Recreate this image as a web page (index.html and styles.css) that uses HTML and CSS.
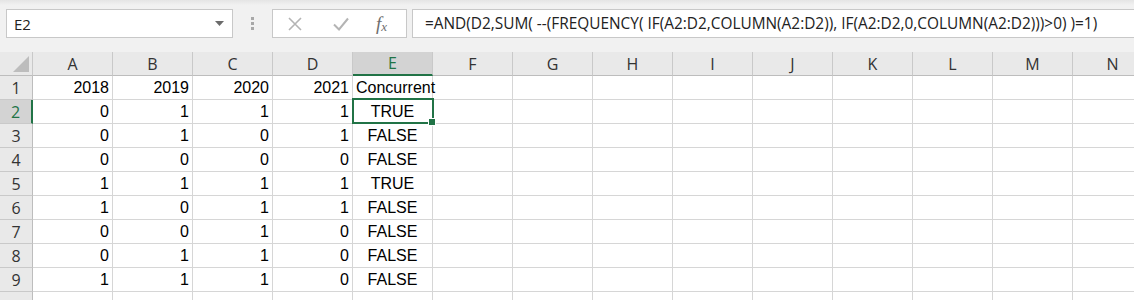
FILE: index.html
```html
<!DOCTYPE html>
<html lang="en">
<head>
    <meta charset="UTF-8">
    <title>Concurrent</title>
    <link rel="stylesheet" href="styles.css">
</head>
<body>

    <!-- Barra de fórmulas -->
    <div class="barra">
        <div class="nombre">
            <span>E2</span>
            <svg class="flecha" width="9" height="5" viewBox="0 0 9 5"><path d="M0 0H9L4.5 5Z" fill="#6b6b6b"/></svg>
        </div>
        <div class="puntos"><i></i><i></i><i></i></div>
        <div class="botones">
            <svg width="16" height="16" viewBox="0 0 16 16"><path d="M2 2L14 14M14 2L2 14" stroke="#b4b4b4" stroke-width="1.6" fill="none"/></svg>
            <svg width="18" height="16" viewBox="0 0 18 16"><path d="M2 8.5L7 13.5L16 2.5" stroke="#b4b4b4" stroke-width="2" fill="none"/></svg>
            <span class="fx">f<sub>x</sub></span>
        </div>
        <div class="formula">=AND(D2,SUM( --(FREQUENCY( IF(A2:D2,COLUMN(A2:D2)), IF(A2:D2,0,COLUMN(A2:D2)))&gt;0) )=1)</div>
    </div>

    <!-- Hoja -->
    <div class="hoja">
        <div class="cab esquina"><svg width="16" height="16" viewBox="0 0 16 16"><path d="M16 0V16H0Z" fill="#bdbdbd"/></svg></div>
        <div class="cab">A</div><div class="cab">B</div><div class="cab">C</div><div class="cab">D</div>
        <div class="cab activa">E</div><div class="cab">F</div><div class="cab">G</div><div class="cab">H</div>
        <div class="cab">I</div><div class="cab">J</div><div class="cab">K</div><div class="cab">L</div>
        <div class="cab">M</div><div class="cab">N</div>

        <div class="fila">1</div>
        <div class="celda num">2018</div><div class="celda num">2019</div><div class="celda num">2020</div><div class="celda num">2021</div>
        <div class="celda">Concurrent</div><div class="celda"></div><div class="celda"></div><div class="celda"></div>
        <div class="celda"></div><div class="celda"></div><div class="celda"></div><div class="celda"></div><div class="celda"></div><div class="celda"></div>

        <div class="fila activa">2</div>
        <div class="celda num">0</div><div class="celda num">1</div><div class="celda num">1</div><div class="celda num">1</div>
        <div class="celda bool sel">TRUE</div><div class="celda"></div><div class="celda"></div><div class="celda"></div>
        <div class="celda"></div><div class="celda"></div><div class="celda"></div><div class="celda"></div><div class="celda"></div><div class="celda"></div>

        <div class="fila">3</div>
        <div class="celda num">0</div><div class="celda num">1</div><div class="celda num">0</div><div class="celda num">1</div>
        <div class="celda bool">FALSE</div><div class="celda"></div><div class="celda"></div><div class="celda"></div>
        <div class="celda"></div><div class="celda"></div><div class="celda"></div><div class="celda"></div><div class="celda"></div><div class="celda"></div>

        <div class="fila">4</div>
        <div class="celda num">0</div><div class="celda num">0</div><div class="celda num">0</div><div class="celda num">0</div>
        <div class="celda bool">FALSE</div><div class="celda"></div><div class="celda"></div><div class="celda"></div>
        <div class="celda"></div><div class="celda"></div><div class="celda"></div><div class="celda"></div><div class="celda"></div><div class="celda"></div>

        <div class="fila">5</div>
        <div class="celda num">1</div><div class="celda num">1</div><div class="celda num">1</div><div class="celda num">1</div>
        <div class="celda bool">TRUE</div><div class="celda"></div><div class="celda"></div><div class="celda"></div>
        <div class="celda"></div><div class="celda"></div><div class="celda"></div><div class="celda"></div><div class="celda"></div><div class="celda"></div>

        <div class="fila">6</div>
        <div class="celda num">1</div><div class="celda num">0</div><div class="celda num">1</div><div class="celda num">1</div>
        <div class="celda bool">FALSE</div><div class="celda"></div><div class="celda"></div><div class="celda"></div>
        <div class="celda"></div><div class="celda"></div><div class="celda"></div><div class="celda"></div><div class="celda"></div><div class="celda"></div>

        <div class="fila">7</div>
        <div class="celda num">0</div><div class="celda num">0</div><div class="celda num">1</div><div class="celda num">0</div>
        <div class="celda bool">FALSE</div><div class="celda"></div><div class="celda"></div><div class="celda"></div>
        <div class="celda"></div><div class="celda"></div><div class="celda"></div><div class="celda"></div><div class="celda"></div><div class="celda"></div>

        <div class="fila">8</div>
        <div class="celda num">0</div><div class="celda num">1</div><div class="celda num">1</div><div class="celda num">0</div>
        <div class="celda bool">FALSE</div><div class="celda"></div><div class="celda"></div><div class="celda"></div>
        <div class="celda"></div><div class="celda"></div><div class="celda"></div><div class="celda"></div><div class="celda"></div><div class="celda"></div>

        <div class="fila">9</div>
        <div class="celda num">1</div><div class="celda num">1</div><div class="celda num">1</div><div class="celda num">0</div>
        <div class="celda bool">FALSE</div><div class="celda"></div><div class="celda"></div><div class="celda"></div>
        <div class="celda"></div><div class="celda"></div><div class="celda"></div><div class="celda"></div><div class="celda"></div><div class="celda"></div>

        <div class="fila ultima"></div>
        <div class="celda"></div><div class="celda"></div><div class="celda"></div><div class="celda"></div>
        <div class="celda"></div><div class="celda"></div><div class="celda"></div><div class="celda"></div>
        <div class="celda"></div><div class="celda"></div><div class="celda"></div><div class="celda"></div><div class="celda"></div><div class="celda"></div>
    </div>

</body>
</html>
```

FILE: styles.css
```css
/* Colores */
:root {
    --fondo-barra: #f1f1f1;
    --borde-caja: #c8c8c8;
    --cabecera: #e9e9e9;
    --cabecera-activa: #d3d3d3;
    --linea: #d6d6d6;
    --verde: #217346;
    --texto: #000;
}

body {
    margin: 0;
    background: var(--fondo-barra);
    font-family: "Liberation Sans", Arial, sans-serif;
    overflow: hidden;
}

/* Barra de fórmulas */
.barra {
    display: flex;
    align-items: center;
    height: 52px;
    padding-left: 6px;
    background: linear-gradient(#e4e4e4, var(--fondo-barra) 5px);
    box-sizing: border-box;
    padding-bottom: 5px;
}

.nombre {
    display: flex;
    align-items: center;
    justify-content: space-between;
    width: 227px;
    height: 29px;
    box-sizing: border-box;
    padding: 0 8px 0 7px;
    background: white;
    border: 1px solid var(--borde-caja);
    font-family: "Open Sans", sans-serif;
    font-size: 15px;
    color: #222;
}

.puntos {
    display: flex;
    flex-direction: column;
    gap: 2px;
    width: 39px;
    align-items: center;
}

.puntos i {
    width: 3px;
    height: 3px;
    background: #a8a8a8;
}

.botones {
    display: flex;
    align-items: center;
    gap: 29px;
    width: 135px;
    height: 29px;
    box-sizing: border-box;
    padding-left: 14px;
    background: white;
    border: 1px solid var(--borde-caja);
}

.fx {
    font-family: "Liberation Serif", serif;
    font-style: italic;
    font-size: 19px;
    color: #6e6e6e;
    margin-left: -3px;
}

.fx sub {
    font-size: 13px;
    vertical-align: -1px;
}

.formula {
    flex: 1;
    height: 29px;
    margin-left: 5px;
    box-sizing: border-box;
    padding-left: 12px;
    line-height: 27px;
    background: white;
    border: 1px solid var(--borde-caja);
    border-right: none;
    font-family: "Open Sans", sans-serif;
    font-size: 15.4px;
    color: #222;
    white-space: nowrap;
}

/* Hoja de cálculo */
.hoja {
    display: grid;
    grid-template-columns: 33px repeat(14, 80px);
    grid-auto-rows: 24px;
    background: white;
    font-size: 16px;
    color: var(--texto);
}

.cab, .fila {
    display: flex;
    align-items: center;
    justify-content: center;
    background: var(--cabecera);
    border-right: 1px solid #c9c9c9;
    border-bottom: 1px solid #bdbdbd;
    box-sizing: border-box;
    font-family: "Open Sans", sans-serif;
    font-size: 16px;
    color: #333;
}

.fila {
    border-bottom-color: #c9c9c9;
    border-right-color: #bdbdbd;
}

.esquina {
    align-items: flex-end;
    justify-content: flex-end;
    padding: 0 3px 3px 0;
}

.cab.activa {
    background: var(--cabecera-activa);
    color: var(--verde);
    border-bottom: 2px solid var(--verde);
}

.fila.activa {
    background: var(--cabecera-activa);
    color: var(--verde);
    border-right: 2px solid var(--verde);
}

.celda {
    display: flex;
    align-items: center;
    padding: 1px 3px 0;
    border-right: 1px solid var(--linea);
    border-bottom: 1px solid var(--linea);
    box-sizing: border-box;
    white-space: nowrap;
}

.num {
    justify-content: flex-end;
}

.bool {
    justify-content: center;
}

/* Celda seleccionada */
.sel {
    position: relative;
}

.sel::after {
    content: "";
    position: absolute;
    top: -2px;
    left: -1px;
    right: -2px;
    bottom: -1px;
    border: 2px solid var(--verde);
}

.sel::before {
    content: "";
    position: absolute;
    right: -4px;
    bottom: -3px;
    width: 6px;
    height: 6px;
    background: var(--verde);
    border: 1px solid white;
    z-index: 1;
}
```
